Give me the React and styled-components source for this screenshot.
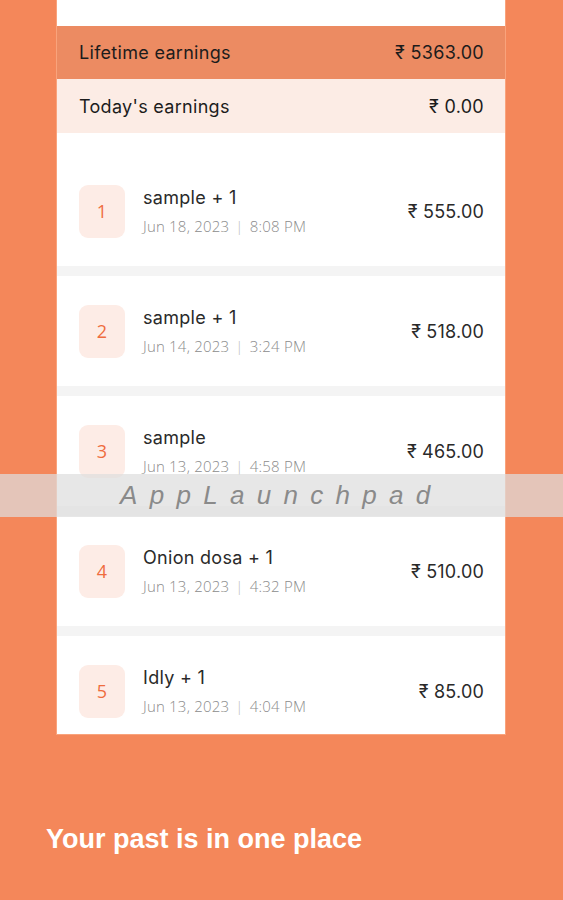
import styled, { createGlobalStyle } from "styled-components";

const orders = [
  { id: 1, name: "sample + 1", date: "Jun 18, 2023", time: "8:08 PM", amount: "555.00" },
  { id: 2, name: "sample + 1", date: "Jun 14, 2023", time: "3:24 PM", amount: "518.00" },
  { id: 3, name: "sample", date: "Jun 13, 2023", time: "4:58 PM", amount: "465.00" },
  { id: 4, name: "Onion dosa + 1", date: "Jun 13, 2023", time: "4:32 PM", amount: "510.00" },
  { id: 5, name: "Idly + 1", date: "Jun 13, 2023", time: "4:04 PM", amount: "85.00" },
];

export default function App() {
  return (
    <Page>
      <GlobalStyle />
      <Card>
        <CardTop />
        <SummaryRow $tone="dark">
          <span>Lifetime earnings</span>
          <span>₹ 5363.00</span>
        </SummaryRow>
        <SummaryRow $tone="light">
          <span>Today's earnings</span>
          <span>₹ 0.00</span>
        </SummaryRow>
        <List>
          {orders.map((o) => (
            <Order key={o.id}>
              <Badge>{o.id}</Badge>
              <Info>
                <OrderName>{o.name}</OrderName>
                <OrderDate>
                  {o.date} <Sep>|</Sep> {o.time}
                </OrderDate>
              </Info>
              <Amount>₹ {o.amount}</Amount>
            </Order>
          ))}
        </List>
      </Card>
      <Caption>Your past is in one place</Caption>
      <Watermark>AppLaunchpad</Watermark>
    </Page>
  );
}

const GlobalStyle = createGlobalStyle`
  html, body {
    margin: 0;
    padding: 0;
    background: #f4875a;
  }
`;

const Page = styled.div`
  position: relative;
  width: 563px;
  height: 900px;
  overflow: hidden;
  background: #f4875a;
  font-family: Inter, "Noto Sans", sans-serif;
`;

const Card = styled.div`
  margin: 0 56px;
  width: 450px;
  height: 735px;
  overflow: hidden;
  background: #fff;
  box-sizing: border-box;
  border: 1px solid #f9a37c;
  border-top: none;
  display: flex;
  flex-direction: column;
`;

const CardTop = styled.div`
  height: 26px;
  flex-shrink: 0;
  background: #fff;
`;

const SummaryRow = styled.div`
  height: ${(p) => (p.$tone === "dark" ? "53px" : "54px")};
  flex-shrink: 0;
  display: flex;
  align-items: center;
  justify-content: space-between;
  padding: 0 21px 0 22px;
  background: ${(p) => (p.$tone === "dark" ? "#ec8b62" : "#fcece5")};
  color: #1c1c1c;
  font-size: 18px;
  letter-spacing: 0.3px;
`;

const List = styled.div`
  padding-top: 23px;
  display: flex;
  flex-direction: column;
  gap: 10px;
  background: #f4f4f4;
`;

const Order = styled.div`
  height: 110px;
  flex-shrink: 0;
  display: flex;
  align-items: center;
  padding: 0 21px 0 22px;
  background: #fff;
  &:first-child {
    margin-top: -23px;
    padding-top: 23px;
  }
`;

const Badge = styled.div`
  width: 46px;
  height: 53px;
  border-radius: 9px;
  background: #fdece6;
  color: #ef6c3e;
  font-family: "Open Sans", sans-serif;
  font-size: 18px;
  display: flex;
  align-items: center;
  justify-content: center;
  flex-shrink: 0;
`;

const Info = styled.div`
  flex: 1;
  margin-left: 18px;
  display: flex;
  flex-direction: column;
  gap: 8px;
`;

const OrderName = styled.div`
  font-size: 18px;
  color: #2a2a2a;
  letter-spacing: 0.3px;
`;

const OrderDate = styled.div`
  font-family: "Open Sans", sans-serif;
  font-weight: 300;
  font-size: 15px;
  letter-spacing: 0.2px;
  color: #8c8c8c;
`;

const Sep = styled.span`
  color: #bdbdbd;
  margin: 0 2px;
`;

const Amount = styled.div`
  font-size: 18px;
  color: #2a2a2a;
  letter-spacing: 0.2px;
`;

const Caption = styled.div`
  margin: 89px 0 0 46px;
  font-family: "Liberation Sans", Arial, sans-serif;
  font-weight: 700;
  font-size: 27px;
  color: #fff;
`;

const Watermark = styled.div`
  position: absolute;
  left: 0;
  right: 0;
  top: 474px;
  height: 43px;
  background: rgba(222, 222, 222, 0.72);
  display: flex;
  align-items: center;
  padding-left: 120px;
  font-family: "Liberation Sans", Arial, sans-serif;
  font-style: italic;
  font-size: 26px;
  letter-spacing: 12.3px;
  color: #8a8a8a;
`;
